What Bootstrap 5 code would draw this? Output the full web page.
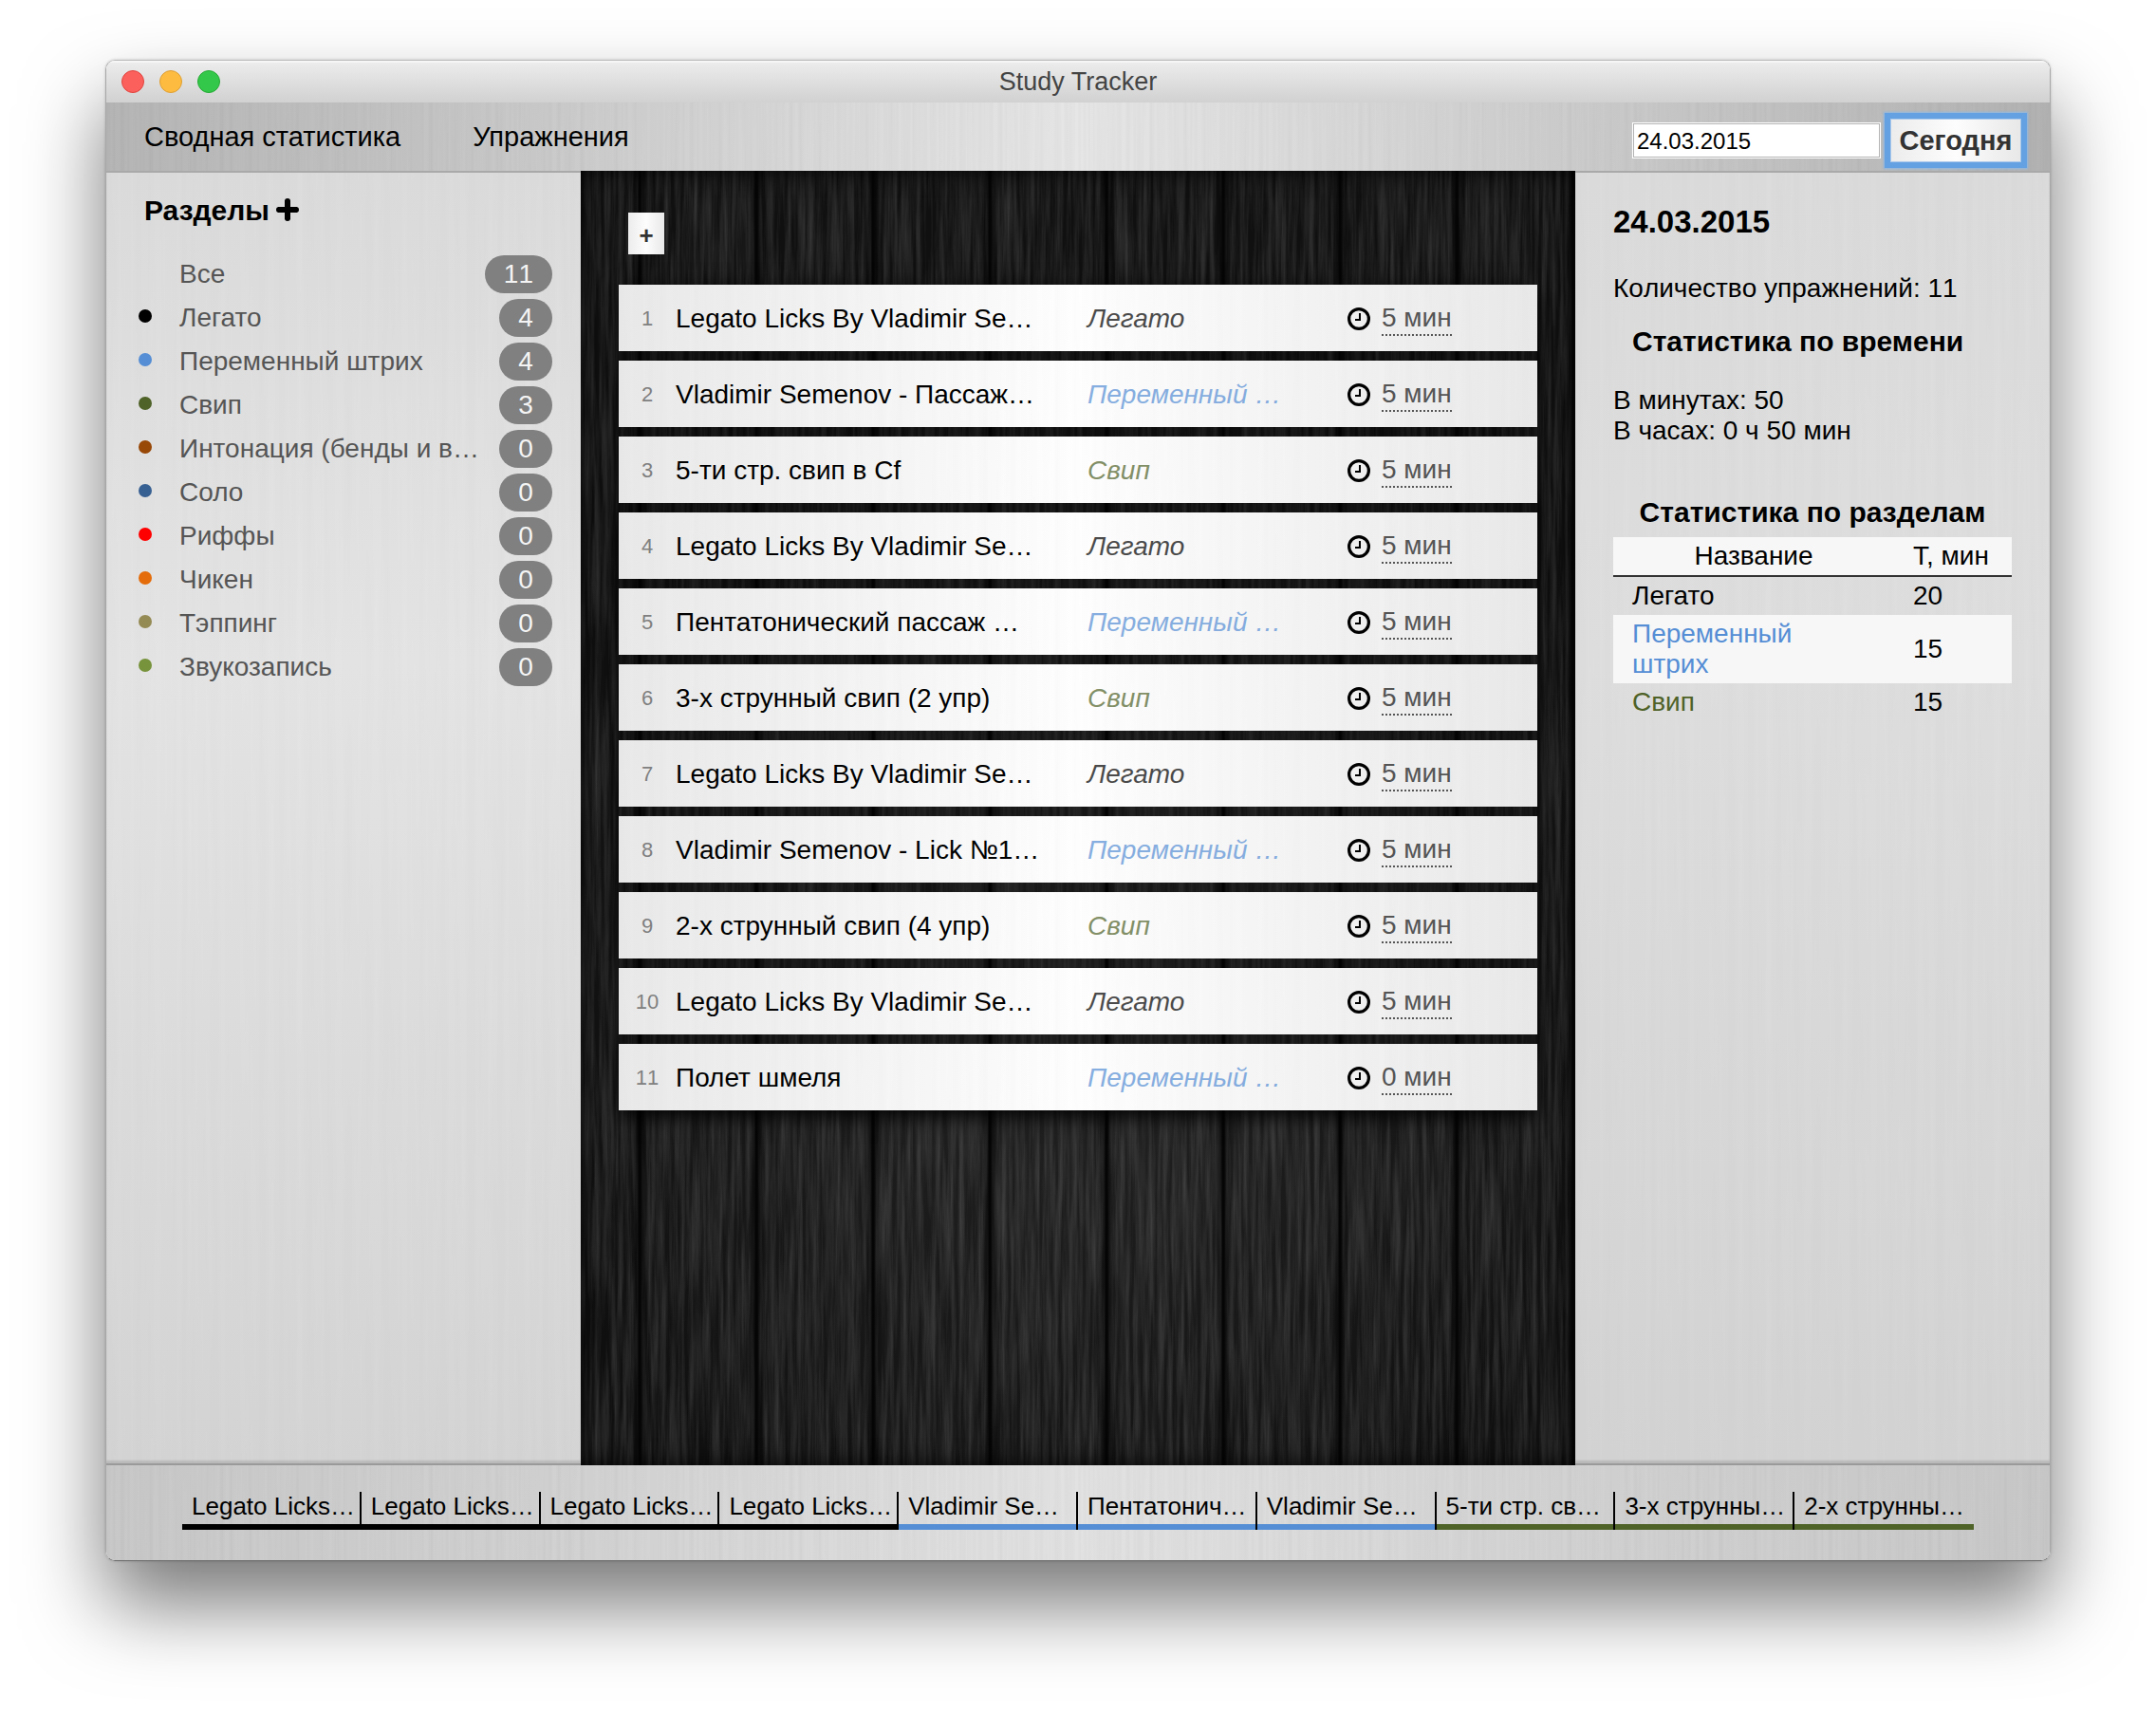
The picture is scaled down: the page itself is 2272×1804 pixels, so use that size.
<!DOCTYPE html>
<html lang="ru">
<head>
<meta charset="utf-8">
<meta name="viewport" content="width=device-width, initial-scale=1">
<title>Study Tracker</title>
<link href="https://cdn.jsdelivr.net/npm/bootstrap@5.3.0/dist/css/bootstrap.min.css" rel="stylesheet">
<style>
  :root {
    --legato: #000000; --alternate: #558ed5; --sweep: #4f6228; --bends: #984807;
    --solo: #376092; --riffs: #ff0000; --chicken: #e46c0a; --tapping: #948a54; --recording: #77933c;
    --brushed: url("data:image/svg+xml,%3Csvg xmlns='http://www.w3.org/2000/svg' width='600' height='400'%3E%3Cfilter id='n' x='0' y='0' width='100%25' height='100%25'%3E%3CfeTurbulence type='fractalNoise' baseFrequency='0.2 0.003' numOctaves='3' seed='4' stitchTiles='stitch'/%3E%3CfeColorMatrix values='0 0 0 0 0 0 0 0 0 0 0 0 0 0 0 .07 0 0 0 -.025'/%3E%3C/filter%3E%3Crect width='600' height='400' filter='url(%23n)'/%3E%3C/svg%3E");
    --brushed-soft: url("data:image/svg+xml,%3Csvg xmlns='http://www.w3.org/2000/svg' width='600' height='400'%3E%3Cfilter id='n' x='0' y='0' width='100%25' height='100%25'%3E%3CfeTurbulence type='fractalNoise' baseFrequency='0.1 0.003' numOctaves='3' seed='7' stitchTiles='stitch'/%3E%3CfeColorMatrix values='0 0 0 0 0 0 0 0 0 0 0 0 0 0 0 .025 0 0 0 -.005'/%3E%3C/filter%3E%3Crect width='600' height='400' filter='url(%23n)'/%3E%3C/svg%3E");
    --grain: url("data:image/svg+xml,%3Csvg xmlns='http://www.w3.org/2000/svg' width='1048' height='700'%3E%3Cfilter id='n' x='0' y='0' width='100%25' height='100%25'%3E%3CfeTurbulence type='fractalNoise' baseFrequency='0.2 0.008' numOctaves='5' seed='9' stitchTiles='stitch'/%3E%3CfeColorMatrix values='0 0 0 0 1 0 0 0 0 1 0 0 0 0 1 .24 0 0 0 -.07'/%3E%3C/filter%3E%3Crect width='1048' height='700' filter='url(%23n)'/%3E%3C/svg%3E");
  }
  body {
    background: #fff; color: #000; min-height: 100vh;
    padding: 63px 111px 159px;
    font-family: "Liberation Sans", Arial, sans-serif; font-size: 28px; line-height: 32px;
  }
  .app-window {
    min-height: calc(100vh - 222px); border: 1px solid #a8a8a8; border-top-color: #bdbdbd; border-bottom-color: #6e6e6e;
    border-radius: 10px; overflow: hidden; box-shadow: 0 46px 84px rgba(0,0,0,.53), 0 0 3px rgba(0,0,0,.2);
  }
  .title-bar { height: 44px; background: linear-gradient(#ededed, #d1d1d1); font-size: 27px; color: #444; box-shadow: inset 0 2px 0 #f6f6f6; }
  .lights { left: 16px; top: 10px; gap: 16px; }
  .light { width: 24px; height: 24px; border-radius: 50%; border: 1px solid; }
  .light-close { background: #fc605c; border-color: #e0443e; }
  .light-min { background: #fdbc40; border-color: #de9f34; }
  .light-zoom { background: #34c84a; border-color: #27aa35; }
  .tool-bar { height: 72px; padding: 0 30px 0 40px; background: var(--brushed), linear-gradient(90deg, #b5b5b5, #c2c2c2 15%, #e6e6e6 50%, #c2c2c2 85%, #b2b2b2); }
  .main-menu { gap: 76px; font-size: 29px; }
  .main-menu a { color: #000; text-decoration: none; }
  .date-form { gap: 10px; padding-top: 8px; }
  .date-input { width: 262px; height: 38px; border: 2px solid #b4b4b4; outline: 1px solid #fff; outline-offset: -1px; background: #fff; color: #000; font-size: 24px; padding: 2px 3px 0; }
  .silver-btn { border: 0; border-radius: 0; color: #333; font-weight: bold; background: linear-gradient(90deg, #ececec, #fdfdfd 50%, #e8e8e8); }
  .today-btn { width: 138px; height: 46px; padding: 0; font-size: 29px; border: 1px solid #a9c8ea; box-shadow: 0 0 0 6px #64a1e2, 0 0 2px 7px #8db7e4; }
  .side-panel { flex: 0 0 500px; width: 500px; min-width: 0; border-top: 2px solid #a9a9a9; border-bottom: 2px solid #9a9a9a; box-shadow: inset 0 -3px 2px rgba(0,0,0,.12);
    background: var(--brushed-soft), linear-gradient(#dcdcdc, #e5e5e5 38%, #d5d5d5); }
  .side-right { background: var(--brushed-soft), linear-gradient(#dcdcdc, #dfdfdf 38%, #d4d4d4); }
  .sections { padding: 22px 30px 0 34px; }
  .sections h1 { font-size: 30px; line-height: 36px; font-weight: bold; padding-left: 6px; margin: 0 0 26px; }
  .plus-icon { width: 24px; height: 24px; margin: 0 0 2px 7px; }
  .section-item { height: 46px; gap: 29px; color: #555; text-decoration: none; }
  .section-item .label { flex: 1 1 0; min-width: 0; white-space: nowrap; }
  .dot { width: 14px; height: 14px; border-radius: 50%; flex: none; margin-bottom: 4px; }
  .count-pill { min-width: 56px; height: 40px; border-radius: 20px; background: #808080; color: #f4f4f4; line-height: 40px; text-align: center; padding: 0 20px; }
  .count-pill, .total, .ex-num { font-kerning: none; }
  .workspace {
    min-width: 0; padding: 44px 40px 40px; position: relative;
    background: var(--grain), radial-gradient(ellipse 60% 50% at 50% 60%, #262626, #101010);
  }
  .seams {
    inset: 0; box-shadow: inset 0 0 24px rgba(0,0,0,.9);
    background: repeating-linear-gradient(90deg, transparent 0, transparent 54px, rgba(0,0,0,.45) 60px, #050505 61px, #050505 63px, rgba(0,0,0,.4) 65px, transparent 72px, transparent 123px);
  }
  .add-btn { width: 38px; height: 44px; margin: 0 0 32px 10px; font-size: 26px; padding: 4px 0 0; line-height: 40px; }
  .exercise-list { gap: 10px; box-shadow: 0 6px 20px #000; background: rgba(0,0,0,.35); }
  .exercise { height: 70px; padding: 2px 0 0 10px; background: var(--brushed-soft), linear-gradient(90deg, #eaeaea, #f3f3f3 22%, #fff 50%, #f3f3f3 78%, #eaeaea); }
  .ex-num { width: 40px; font-size: 22px; color: #808080; text-align: center; }
  .ex-name { width: 444px; padding-left: 10px; white-space: nowrap; }
  .ex-cat { width: 274px; font-style: italic; opacity: .7; white-space: nowrap; }
  .clock { width: 24px; height: 24px; margin-right: 12px; }
  .ex-time { color: #555; border-bottom: 2px dotted #555; line-height: 34px; text-decoration: none; }
  .stats { padding: 34px 40px 0; }
  .stats h2 { font-size: 33px; line-height: 36px; font-weight: bold; margin: 0 0 36px; }
  .stats h3 { font-size: 30px; line-height: 36px; font-weight: bold; margin: 0; padding-left: 20px; }
  .stats .total { margin: 0 0 22px; }
  .stats .spent { margin: 28px 0 52px; }
  .stat-table { width: 100%; margin-top: 8px; table-layout: fixed; line-height: 32px; }
  .stat-table th, .stat-table td { padding: 4px 20px; font-weight: normal; }
  .stat-table thead, .stat-table .striped { background: #f7f7f7; }
  .stat-table thead tr { border-bottom: 2px solid #333; }
  .stat-table .col-time { width: 124px; }
  .timeline { height: 100px; padding: 28px 80px 0; background: var(--brushed), linear-gradient(90deg, #c8c8c8, #d2d2d2 25%, #e2e2e2 50%, #d2d2d2 75%, #c8c8c8); }
  .slot { flex: 1 1 0; min-width: 0; height: 40px; padding-left: 10px; line-height: 30px; font-size: 26px; border-bottom: 6px solid; white-space: nowrap; }
  .slot + .slot { box-shadow: -2px 0 0 #000; }
  .c-legato { color: var(--legato); } .c-alternate { color: var(--alternate); } .c-sweep { color: var(--sweep); }
  .b-legato { border-color: var(--legato); } .b-alternate { border-color: var(--alternate); } .b-sweep { border-color: var(--sweep); }
</style>
</head>
<body>
<svg class="d-none" aria-hidden="true">
  <symbol id="clock" viewBox="0 0 24 24"><circle cx="12" cy="12" r="10.400" fill="none" stroke="#000" stroke-width="3.200"/><path d="M13 6v7H8" fill="none" stroke="#000" stroke-width="2"/></symbol>
</svg>
<div class="app-window d-flex flex-column">
  <header class="title-bar position-relative d-flex align-items-center justify-content-center flex-shrink-0">
    <div class="lights d-flex position-absolute"><span class="light light-close"></span><span class="light light-min"></span><span class="light light-zoom"></span></div>
    <span>Study Tracker</span>
  </header>
  <div class="tool-bar d-flex align-items-center justify-content-between flex-shrink-0">
    <nav class="main-menu d-flex"><a href="#">Сводная статистика</a><a href="#">Упражнения</a></nav>
    <div class="date-form d-flex align-items-center"><input class="date-input" type="text" value="24.03.2015" aria-label="Дата"><button type="button" class="silver-btn today-btn">Сегодня</button></div>
  </div>
  <main class="d-flex flex-grow-1">
    <aside class="side-panel">
      <div class="sections">
        <h1 class="d-flex align-items-center">Разделы<svg class="plus-icon" viewBox="0 0 24 24" aria-hidden="true"><path d="M12 3v18M3 12h18" stroke="#000" stroke-width="6" stroke-linecap="round"/><path d="M12 2v20M2 12h20" stroke="#000" stroke-width="6"/></svg></h1>
        <nav>
          <a href="#" class="section-item d-flex align-items-center"><span class="dot"></span><span class="label">Все</span><span class="count-pill">11</span></a>
          <a href="#" class="section-item d-flex align-items-center"><span class="dot" style="background:var(--legato)"></span><span class="label">Легато</span><span class="count-pill">4</span></a>
          <a href="#" class="section-item d-flex align-items-center"><span class="dot" style="background:var(--alternate)"></span><span class="label">Переменный штрих</span><span class="count-pill">4</span></a>
          <a href="#" class="section-item d-flex align-items-center"><span class="dot" style="background:var(--sweep)"></span><span class="label">Свип</span><span class="count-pill">3</span></a>
          <a href="#" class="section-item d-flex align-items-center"><span class="dot" style="background:var(--bends)"></span><span class="label">Интонация (бенды и в…</span><span class="count-pill">0</span></a>
          <a href="#" class="section-item d-flex align-items-center"><span class="dot" style="background:var(--solo)"></span><span class="label">Соло</span><span class="count-pill">0</span></a>
          <a href="#" class="section-item d-flex align-items-center"><span class="dot" style="background:var(--riffs)"></span><span class="label">Риффы</span><span class="count-pill">0</span></a>
          <a href="#" class="section-item d-flex align-items-center"><span class="dot" style="background:var(--chicken)"></span><span class="label">Чикен</span><span class="count-pill">0</span></a>
          <a href="#" class="section-item d-flex align-items-center"><span class="dot" style="background:var(--tapping)"></span><span class="label">Тэппинг</span><span class="count-pill">0</span></a>
          <a href="#" class="section-item d-flex align-items-center"><span class="dot" style="background:var(--recording)"></span><span class="label">Звукозапись</span><span class="count-pill">0</span></a>
        </nav>
      </div>
    </aside>
    <section class="workspace flex-grow-1">
      <div class="seams position-absolute"></div>
      <div class="position-relative">
        <button type="button" class="silver-btn add-btn d-block" aria-label="Добавить">+</button>
        <div class="exercise-list d-flex flex-column">
          <div class="exercise d-flex align-items-center"><span class="ex-num">1</span><span class="ex-name">Legato Licks By Vladimir Se…</span><span class="ex-cat c-legato">Легато</span><svg class="clock"><use href="#clock"/></svg><a href="#" class="ex-time">5 мин</a></div>
          <div class="exercise d-flex align-items-center"><span class="ex-num">2</span><span class="ex-name">Vladimir Semenov - Пассаж…</span><span class="ex-cat c-alternate">Переменный …</span><svg class="clock"><use href="#clock"/></svg><a href="#" class="ex-time">5 мин</a></div>
          <div class="exercise d-flex align-items-center"><span class="ex-num">3</span><span class="ex-name">5-ти стр. свип в Cf</span><span class="ex-cat c-sweep">Свип</span><svg class="clock"><use href="#clock"/></svg><a href="#" class="ex-time">5 мин</a></div>
          <div class="exercise d-flex align-items-center"><span class="ex-num">4</span><span class="ex-name">Legato Licks By Vladimir Se…</span><span class="ex-cat c-legato">Легато</span><svg class="clock"><use href="#clock"/></svg><a href="#" class="ex-time">5 мин</a></div>
          <div class="exercise d-flex align-items-center"><span class="ex-num">5</span><span class="ex-name">Пентатонический пассаж …</span><span class="ex-cat c-alternate">Переменный …</span><svg class="clock"><use href="#clock"/></svg><a href="#" class="ex-time">5 мин</a></div>
          <div class="exercise d-flex align-items-center"><span class="ex-num">6</span><span class="ex-name">3-х струнный свип (2 упр)</span><span class="ex-cat c-sweep">Свип</span><svg class="clock"><use href="#clock"/></svg><a href="#" class="ex-time">5 мин</a></div>
          <div class="exercise d-flex align-items-center"><span class="ex-num">7</span><span class="ex-name">Legato Licks By Vladimir Se…</span><span class="ex-cat c-legato">Легато</span><svg class="clock"><use href="#clock"/></svg><a href="#" class="ex-time">5 мин</a></div>
          <div class="exercise d-flex align-items-center"><span class="ex-num">8</span><span class="ex-name">Vladimir Semenov - Lick №1…</span><span class="ex-cat c-alternate">Переменный …</span><svg class="clock"><use href="#clock"/></svg><a href="#" class="ex-time">5 мин</a></div>
          <div class="exercise d-flex align-items-center"><span class="ex-num">9</span><span class="ex-name">2-х струнный свип (4 упр)</span><span class="ex-cat c-sweep">Свип</span><svg class="clock"><use href="#clock"/></svg><a href="#" class="ex-time">5 мин</a></div>
          <div class="exercise d-flex align-items-center"><span class="ex-num">10</span><span class="ex-name">Legato Licks By Vladimir Se…</span><span class="ex-cat c-legato">Легато</span><svg class="clock"><use href="#clock"/></svg><a href="#" class="ex-time">5 мин</a></div>
          <div class="exercise d-flex align-items-center"><span class="ex-num">11</span><span class="ex-name">Полет шмеля</span><span class="ex-cat c-alternate">Переменный …</span><svg class="clock"><use href="#clock"/></svg><a href="#" class="ex-time">0 мин</a></div>
        </div>
      </div>
    </section>
    <aside class="side-panel side-right">
      <div class="stats">
        <h2>24.03.2015</h2>
        <p class="total">Количество упражнений: 11</p>
        <h3>Статистика по времени</h3>
        <p class="spent">В минутах: 50<br>В часах: 0 ч 50 мин</p>
        <h3 class="px-0 text-center">Статистика по разделам</h3>
        <table class="stat-table">
          <thead><tr><th class="text-center">Название</th><th class="col-time text-nowrap">Т, мин</th></tr></thead>
          <tbody>
            <tr><td>Легато</td><td>20</td></tr>
            <tr class="striped"><td class="c-alternate">Переменный штрих</td><td>15</td></tr>
            <tr><td class="c-sweep">Свип</td><td>15</td></tr>
          </tbody>
        </table>
      </div>
    </aside>
  </main>
  <footer class="timeline d-flex flex-shrink-0">
    <div class="slot b-legato">Legato Licks…</div>
    <div class="slot b-legato">Legato Licks…</div>
    <div class="slot b-legato">Legato Licks…</div>
    <div class="slot b-legato">Legato Licks…</div>
    <div class="slot b-alternate">Vladimir Se…</div>
    <div class="slot b-alternate">Пентатонич…</div>
    <div class="slot b-alternate">Vladimir Se…</div>
    <div class="slot b-sweep">5-ти стр. св…</div>
    <div class="slot b-sweep">3-х струнны…</div>
    <div class="slot b-sweep">2-х струнны…</div>
  </footer>
</div>
<script src="https://cdn.jsdelivr.net/npm/bootstrap@5.3.0/dist/js/bootstrap.bundle.min.js"></script>
</body>
</html>
